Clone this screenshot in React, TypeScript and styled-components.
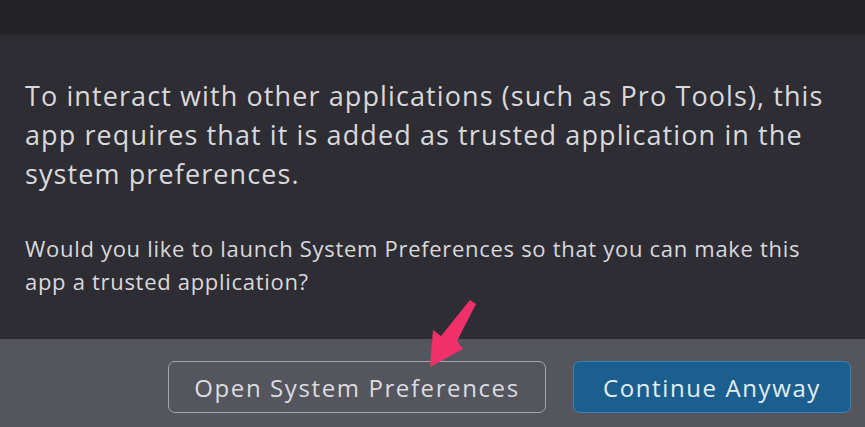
import styled, { createGlobalStyle } from "styled-components";

const GlobalStyle = createGlobalStyle`
  html, body {
    margin: 0;
    padding: 0;
    background: #2e2d33;
  }
  * {
    box-sizing: border-box;
  }
`;

const Window = styled.div`
  position: relative;
  display: flex;
  flex-direction: column;
  width: 865px;
  height: 427px;
  overflow: hidden;
  font-family: "Open Sans", "Noto Sans", sans-serif;
`;

const TitleBar = styled.div`
  height: 35px;
  background: #242328;
  border-bottom: 1px solid #2a2a2f;
`;

const Body = styled.div`
  flex: 1;
  display: flex;
  flex-direction: column;
  padding: 41px 25px 0;
  background: #2e2d33;
`;

const Lead = styled.p`
  margin: 0;
  max-width: 812px;
  font-size: 27px;
  line-height: 39px;
  letter-spacing: 1.1px;
  color: #d9d9dd;
`;

const Question = styled.p`
  margin: 39px 0 0;
  max-width: 805px;
  font-size: 22px;
  line-height: 33px;
  letter-spacing: 0.7px;
  color: #d9d9dd;
`;

const Footer = styled.div`
  height: 88px;
  display: flex;
  justify-content: flex-end;
  align-items: flex-start;
  gap: 27px;
  padding: 22px 14px 0 0;
  background: #55555d;
`;

const Button = styled.button<{ $primary?: boolean; $width: number }>`
  width: ${(p) => p.$width}px;
  height: 52px;
  padding: 0;
  border-radius: 7px;
  font-family: "Open Sans", "Noto Sans", sans-serif;
  font-size: 24px;
  letter-spacing: 1.6px;
  cursor: pointer;
  color: ${(p) => (p.$primary ? "#e3edf6" : "#dcdce0")};
  background: ${(p) => (p.$primary ? "#1b5f8f" : "#55555d")};
  border: 1.5px solid ${(p) => (p.$primary ? "#3d82b3" : "#a4a4ab")};
`;

const Arrow = styled.svg`
  position: absolute;
  left: 420px;
  top: 292px;
  width: 64px;
  height: 84px;
  pointer-events: none;
`;

export default function App() {
  return (
    <Window>
      <GlobalStyle />
      <TitleBar />
      <Body>
        <Lead>
          To interact with other applications (such as Pro Tools), this app
          requires that it is added as trusted application in the system
          preferences.
        </Lead>
        <Question>
          Would you like to launch System Preferences so that you can make this
          app a trusted application?
        </Question>
      </Body>
      <Footer>
        <Button $width={378}>Open System Preferences</Button>
        <Button $width={278} $primary>
          Continue Anyway
        </Button>
      </Footer>
      <Arrow viewBox="0 0 64 84">
        <path
          d="M50 8 L56 12 L37 49 L43 57 L10 75 L13 38 L21 44 Z"
          fill="#f0306b"
          strokeLinejoin="round"
        />
      </Arrow>
    </Window>
  );
}
